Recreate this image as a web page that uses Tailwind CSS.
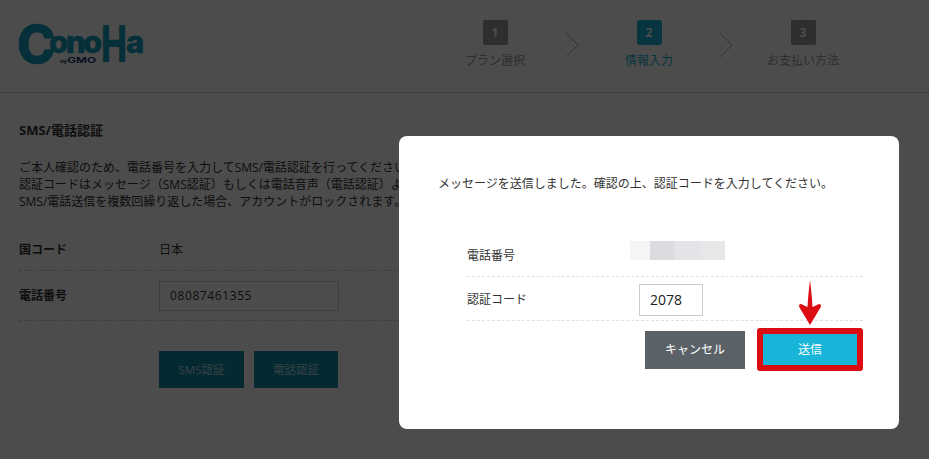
<!DOCTYPE html>
<html lang="ja">
<head>
    <meta charset="UTF-8">
    <meta name="viewport" content="width=device-width, initial-scale=1.0">
    <title>SMS/電話認証</title>
    <script src="https://cdn.jsdelivr.net/npm/@tailwindcss/browser@4"></script>
</head>
<body class="relative w-[929px] h-[459px] overflow-hidden bg-white text-[#333] text-[12px] font-['Open_Sans','Noto_Sans_CJK_JP',sans-serif]">
    <!-- page under the overlay -->
    <header class="h-[93px] border-b border-[#ccc] flex items-start justify-between pl-[19px] pr-[76px]">
        <svg class="mt-[14px] overflow-visible" width="130" height="60" viewBox="0 0 130 60" fill="#139fc0" font-family="Inter, sans-serif" font-weight="800">
            <text font-size="31" stroke="#139fc0" stroke-width=".6"><tspan x="-2" y="48.5" font-size="52">C</tspan><tspan x="30" y="39">o</tspan><tspan x="47" y="39">n</tspan><tspan x="64" y="39">o</tspan></text>
            <text x="82" y="48" font-size="51" textLength="26" lengthAdjust="spacingAndGlyphs">H</text>
            <text x="107" y="39" font-size="31" stroke="#139fc0" stroke-width=".6">a</text>
            <text x="41" y="49" font-size="8" fill="#173a6a" font-weight="700" textLength="36" lengthAdjust="spacingAndGlyphs"><tspan font-size="4">by</tspan>GMO</text>
        </svg>
        <div class="flex items-start pt-[20px]">
            <div class="w-[100px] flex flex-col items-center gap-[7px]">
                <div class="w-[25px] h-[25px] bg-[#999] rounded-[2px] flex items-center justify-center text-white font-bold text-[12px]">1</div>
                <span class="text-[#999] leading-[18px]">プラン選択</span>
            </div>
            <div class="w-[54px] flex justify-center pt-[12px]">
                <svg width="14" height="26" viewBox="0 0 14 26" fill="none" stroke="#aaa" stroke-width="1"><path d="M1 1l12 12L1 25"/></svg>
            </div>
            <div class="w-[100px] flex flex-col items-center gap-[7px]">
                <div class="w-[25px] h-[25px] bg-[#19b5d8] rounded-[3px] flex items-center justify-center text-white font-bold text-[12px]">2</div>
                <span class="text-[#19b5d8] leading-[18px]">情報入力</span>
            </div>
            <div class="w-[54px] flex justify-center pt-[12px]">
                <svg width="14" height="26" viewBox="0 0 14 26" fill="none" stroke="#aaa" stroke-width="1"><path d="M1 1l12 12L1 25"/></svg>
            </div>
            <div class="w-[100px] flex flex-col items-center gap-[7px]">
                <div class="w-[25px] h-[25px] bg-[#999] rounded-[2px] flex items-center justify-center text-white font-bold text-[12px]">3</div>
                <span class="text-[#999] leading-[18px]">お支払い方法</span>
            </div>
        </div>
    </header>
    <main class="pl-[19px] pr-[19px] pt-[28px] w-[700px]">
        <h2 class="font-bold text-[13px] leading-[18px]">SMS/電話認証</h2>
        <div class="mt-[20px] leading-[17px] whitespace-nowrap">
            <p>ご本人確認のため、電話番号を入力してSMS/電話認証を行ってください。</p>
            <p>認証コードはメッセージ（SMS認証）もしくは電話音声（電話認証）よりお知らせします。</p>
            <p>SMS/電話送信を複数回繰り返した場合、アカウントがロックされます。</p>
        </div>
        <div class="mt-[19px] flex items-center h-[42px] border-b border-dashed border-[#ccc]">
            <span class="w-[140px] font-semibold">国コード</span><span>日本</span>
        </div>
        <div class="flex items-center h-[50px] border-b border-dashed border-[#ccc]">
            <span class="w-[140px] font-semibold">電話番号</span>
            <div class="w-[180px] h-[30px] border border-[#ccc] flex items-center px-[10px] text-[12px] tracking-[0.6px]">08087461355</div>
        </div>
        <div class="mt-[30px] ml-[140px] flex gap-[10px]">
            <button class="w-[85px] h-[37px] bg-[#1089a6] text-white/70 text-[11.5px]">SMS認証</button>
            <button class="w-[84px] h-[37px] bg-[#1089a6] text-white/70 text-[11.5px]">電話認証</button>
        </div>
    </main>

    <!-- overlay + dialog -->
    <div class="absolute inset-0 bg-black/70"></div>
    <div class="absolute left-[399px] top-[136px] w-[500px] h-[293px] bg-white rounded-[8px] pl-[40px] pt-[40px] text-[#333]">
        <p class="text-[12px] leading-[16px] whitespace-nowrap -ml-px">メッセージを送信しました。確認の上、認証コードを入力してください。</p>
        <div class="ml-[28px] mt-[41px] w-[396px]">
            <div class="flex items-center h-[44px] border-b border-dashed border-[#e2e2e2]">
                <span class="w-[163px] pt-[2px]">電話番号</span>
                <div class="flex h-[19px] w-[95px] -mt-[9px] bg-[#eee]">
                    <div class="w-[20px] bg-[#f5f5f5]"></div>
                    <div class="w-[24px] bg-[#dcdce0]"></div>
                    <div class="w-[26px] bg-[#e4e4e8]"></div>
                    <div class="w-[25px] bg-[#e8e6e8]"></div>
                </div>
            </div>
            <div class="flex items-center h-[44px] border-b border-dashed border-[#e2e2e2] pt-[2px]">
                <span class="w-[172px]">認証コード</span>
                <div class="w-[64px] h-[32px] border border-[#ccc] flex items-center px-[10px] text-[14px] text-[#222]">2078</div>
            </div>
            <div class="flex justify-end items-center mt-[7px] gap-[12px]">
                <button class="w-[100px] h-[38px] bg-[#5a6268] text-white text-[12px]">キャンセル</button>
                <div class="w-[106px] h-[43px] bg-[#dc0d12] rounded-[3px] p-[6px] flex">
                    <button class="w-full h-full bg-[#19b5d8] text-white text-[12px]">送信</button>
                </div>
            </div>
        </div>
    </div>
    <!-- annotation arrow -->
    <svg class="absolute left-[798px] top-[279px]" width="24" height="47" viewBox="0 0 24 47" fill="#dc0d12">
        <path d="M12 1C13 10 14 18 14.5 28L21 25C23 25 23.5 27 22.5 28.5L12 46L1.5 28.5C.5 27 1 25 3 25L9.5 28C10 18 11 10 12 1Z"/>
    </svg>
</body>
</html>
